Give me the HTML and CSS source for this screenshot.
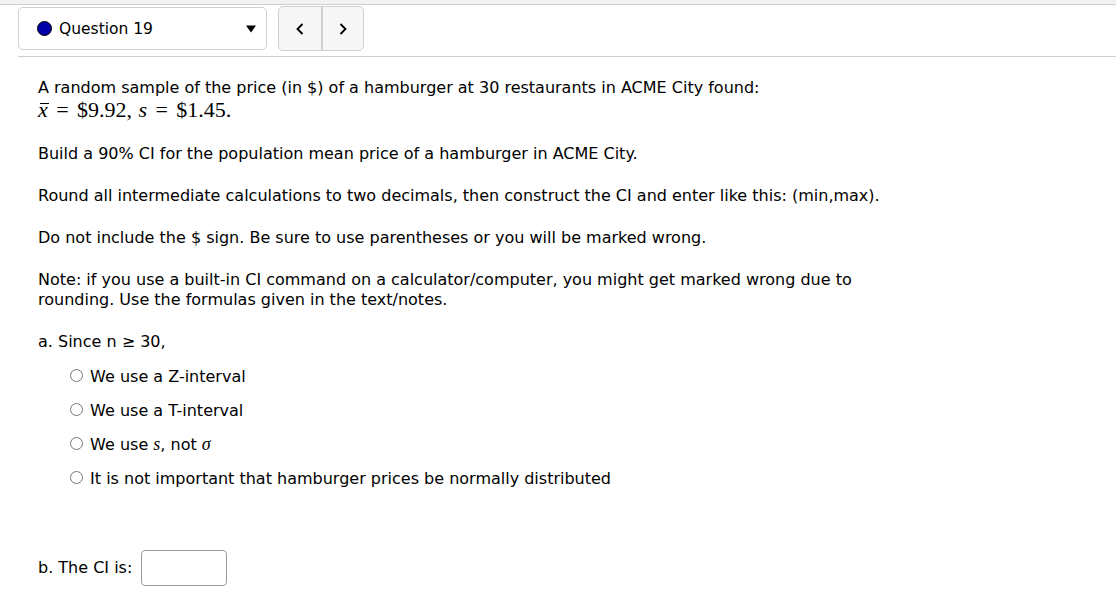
FILE: index.html
```html
<!DOCTYPE html>
<html>
<head>
<meta charset="utf-8">
<link rel="stylesheet" href="styles.css">
</head>
<body>
<div class="topstrip"></div>
<header class="qbar">
  <div class="qselect">
    <span class="dot"></span>
    <span class="qlabel">Question 19</span>
    <svg class="caret" width="10" height="8" viewBox="0 0 10 8"><polygon points="0,0.5 10,0.5 5,7.5" fill="#000"/></svg>
  </div>
  <div class="qnav">
    <button class="navbtn" aria-label="Previous"><svg width="10" height="14" viewBox="0 0 10 14"><polyline points="7.5,2 2.5,7 7.5,12" fill="none" stroke="#000" stroke-width="1.8"/></svg></button>
    <button class="navbtn" aria-label="Next"><svg width="10" height="14" viewBox="0 0 10 14"><polyline points="2.5,2 7.5,7 2.5,12" fill="none" stroke="#000" stroke-width="1.8"/></svg></button>
  </div>
</header>
<main class="content">
  <p class="intro">A random sample of the price (in $) of a hamburger at 30 restaurants in ACME City found:<br>
  <span class="math"><i class="xbar">x</i><span class="mrel">=</span>$9.92,<span class="msp"></span><i>s</i><span class="mrel">=</span>$1.45.</span></p>
  <p>Build a 90% CI for the population mean price of a hamburger in ACME City.</p>
  <p>Round all intermediate calculations to two decimals, then construct the CI and enter like this: (min,max).</p>
  <p>Do not include the $ sign. Be sure to use parentheses or you will be marked wrong.</p>
  <p>Note: if you use a built-in CI command on a calculator/computer, you might get marked wrong due to rounding. Use the formulas given in the text/notes.</p>
  <p class="parta">a. Since n &ge; 30,</p>
  <ul class="choices">
    <li><label><input type="radio" name="a"> We use a Z-interval</label></li>
    <li><label><input type="radio" name="a"> We use a T-interval</label></li>
    <li><label><input type="radio" name="a"> We use <i class="mvar">s</i>, not <i class="mvar">&sigma;</i></label></li>
    <li><label><input type="radio" name="a"> It is not important that hamburger prices be normally distributed</label></li>
  </ul>
  <p class="partb">b. The CI is: <input type="text" class="answer"></p>
</main>
</body>
</html>
```

FILE: styles.css
```css
html, body {
  margin: 0;
  padding: 0;
  background: #fff;
}
body {
  font-family: "DejaVu Sans", Verdana, sans-serif;
  font-size: 16px;
  color: #000;
}
.topstrip {
  height: 4px;
  background: #f2f2f2;
  border-bottom: 1px solid #cfcfcf;
}
.qbar {
  display: flex;
  align-items: center;
  gap: 11px;
  margin-left: 18px;
  padding: 1px 0 5px;
  border-bottom: 1px solid #cfcfcf;
}
.qselect {
  width: 249px;
  height: 43px;
  box-sizing: border-box;
  border: 1px solid #d0d0d0;
  border-radius: 5px;
  display: flex;
  align-items: center;
  padding: 0 10px 0 18px;
}
.dot {
  width: 13px;
  height: 13px;
  border-radius: 50%;
  background: #0000a8;
  border: 1px solid #000;
  margin-right: 7px;
}
.qlabel {
  flex: 1;
  font-size: 15.5px;
}
.caret {
  display: block;
}
.qnav {
  display: flex;
  height: 43px;
  border: 1px solid #d0d0d0;
  border-radius: 5px;
  background: #f7f7f7;
  overflow: hidden;
}
.navbtn {
  width: 42px;
  border: 0;
  background: transparent;
  padding: 0;
  display: flex;
  align-items: center;
  justify-content: center;
}
.navbtn svg {
  display: block;
}
.navbtn + .navbtn {
  border-left: 2px solid #d0d0d0;
}
.content {
  padding: 21px 38px;
  max-width: 880px;
}
.content p {
  margin: 0 0 22px;
  line-height: 20px;
}
.content p.intro {
  margin-bottom: 22px;
}
.math {
  display: inline-block;
  font-family: "Liberation Serif", "DejaVu Serif", serif;
  font-size: 22px;
  line-height: 23px;
}
.xbar {
  display: inline-block;
  position: relative;
}
.xbar::before {
  content: "";
  position: absolute;
  left: 2px;
  right: -1px;
  top: 5px;
  border-top: 1px solid #000;
}
.mrel {
  margin: 0 0.38em;
}
.msp {
  display: inline-block;
  width: 0.3em;
}
.mvar {
  font-family: "Liberation Serif", "DejaVu Serif", serif;
  font-size: 18px;
}
.content p.parta {
  margin-bottom: 7px;
}
.choices {
  list-style: none;
  margin: 0;
  padding: 0 0 0 30px;
}
.choices li {
  height: 34px;
  display: flex;
  align-items: center;
}
.choices input {
  margin: 0 2px 0 2px;
  width: 13px;
  height: 13px;
}
.content p.partb {
  margin-top: 55px;
  display: flex;
  align-items: center;
  gap: 9px;
}
.answer {
  width: 86px;
  height: 36px;
  box-sizing: border-box;
  border: 1px solid #999;
  border-radius: 4px;
}
```
